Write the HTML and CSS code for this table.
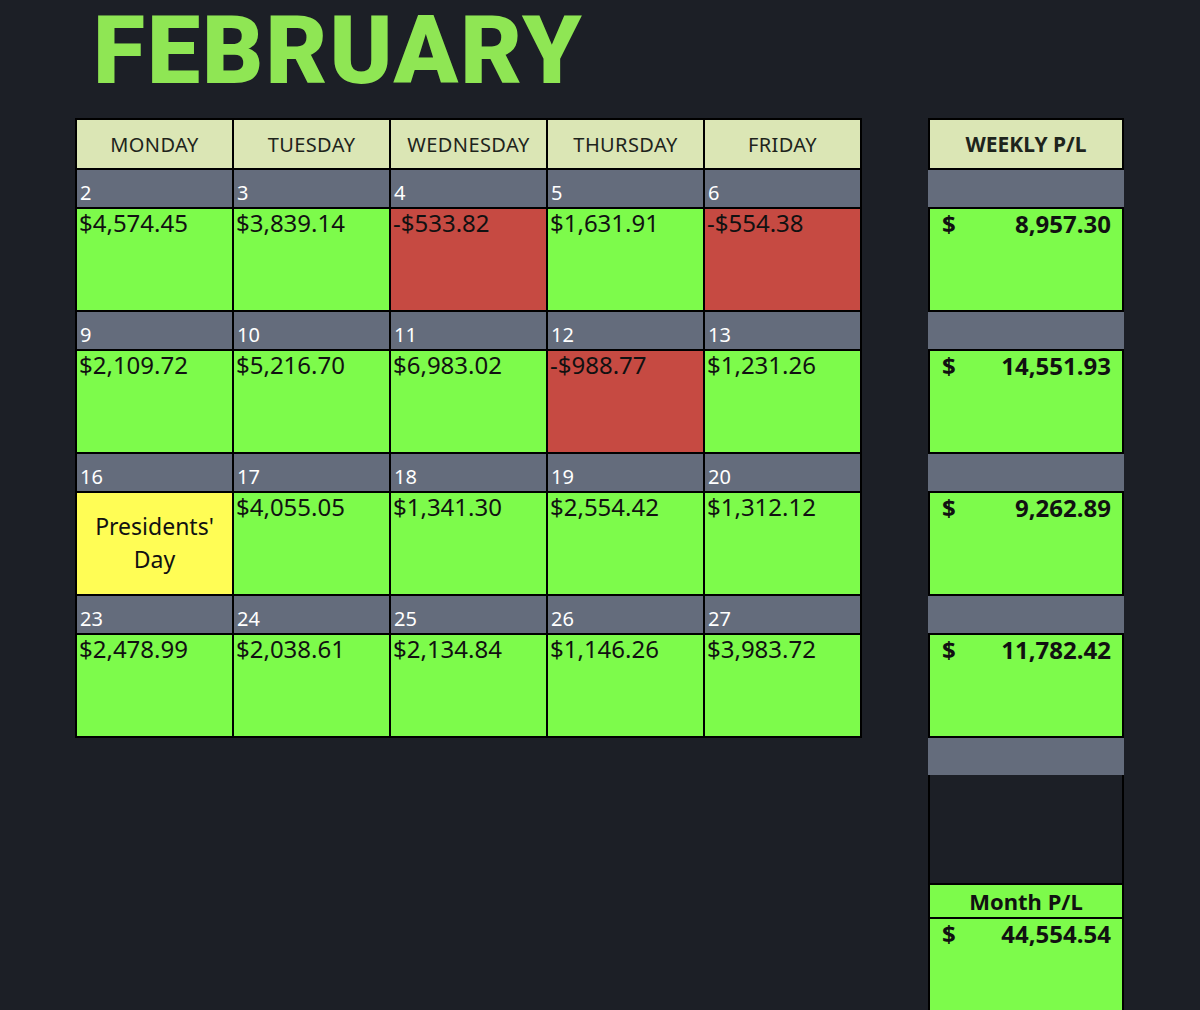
FILE: index.html
```html
<!DOCTYPE html>
<html>
<head>
<meta charset="utf-8">
<link rel="stylesheet" href="styles.css">
</head>
<body>
<div class="page">
  <h1 class="title">FEBRUARY</h1>
  <div class="board">
    <div class="calendar">
      <div class="hd">MONDAY</div>
      <div class="hd">TUESDAY</div>
      <div class="hd">WEDNESDAY</div>
      <div class="hd">THURSDAY</div>
      <div class="hd">FRIDAY</div>

      <div class="dt">2</div><div class="dt">3</div><div class="dt">4</div><div class="dt">5</div><div class="dt">6</div>
      <div class="val win">$4,574.45</div>
      <div class="val win">$3,839.14</div>
      <div class="val loss">-$533.82</div>
      <div class="val win">$1,631.91</div>
      <div class="val loss">-$554.38</div>

      <div class="dt">9</div><div class="dt">10</div><div class="dt">11</div><div class="dt">12</div><div class="dt">13</div>
      <div class="val win">$2,109.72</div>
      <div class="val win">$5,216.70</div>
      <div class="val win">$6,983.02</div>
      <div class="val loss">-$988.77</div>
      <div class="val win">$1,231.26</div>

      <div class="dt">16</div><div class="dt">17</div><div class="dt">18</div><div class="dt">19</div><div class="dt">20</div>
      <div class="val holiday">Presidents'<br>Day</div>
      <div class="val win">$4,055.05</div>
      <div class="val win">$1,341.30</div>
      <div class="val win">$2,554.42</div>
      <div class="val win">$1,312.12</div>

      <div class="dt">23</div><div class="dt">24</div><div class="dt">25</div><div class="dt">26</div><div class="dt">27</div>
      <div class="val win">$2,478.99</div>
      <div class="val win">$2,038.61</div>
      <div class="val win">$2,134.84</div>
      <div class="val win">$1,146.26</div>
      <div class="val win">$3,983.72</div>
    </div>

    <div class="weekly">
      <div class="whd">WEEKLY P/L</div>
      <div class="wdt"></div>
      <div class="wval"><span>$</span><span>8,957.30</span></div>
      <div class="wdt"></div>
      <div class="wval"><span>$</span><span>14,551.93</span></div>
      <div class="wdt"></div>
      <div class="wval"><span>$</span><span>9,262.89</span></div>
      <div class="wdt"></div>
      <div class="wval"><span>$</span><span>11,782.42</span></div>
      <div class="wdt"></div>
      <div class="wempty"></div>
      <div class="mhd">Month P/L</div>
      <div class="mval"><span>$</span><span>44,554.54</span></div>
    </div>
  </div>
</div>
</body>
</html>
```

FILE: styles.css
```css
html, body {
  margin: 0;
  padding: 0;
  background: #1c1f26;
  height: 100%;
  overflow: hidden;
}

.page {
  font-family: "Noto Sans", "DejaVu Sans", sans-serif;
  color: #111;
  padding-top: 1px;
}

.title {
  margin: -6px 0 0 0;
  padding: 0 0 0 93px;
  height: 123px;
  font-family: Roboto, "Liberation Sans", sans-serif;
  font-weight: 900;
  font-size: 95px;
  line-height: 112px;
  letter-spacing: 2px;
  color: #8fe654;
}

.board {
  display: flex;
  align-items: flex-start;
  padding-left: 75px;
  gap: 66px;
}

.calendar {
  display: grid;
  grid-template-columns: repeat(5, 155px);
  grid-template-rows: 48px repeat(4, 37px 101px);
  gap: 2px;
  padding: 2px;
  background: #000;
  width: 783px;
}

.hd {
  background: #dbe6b5;
  display: flex;
  align-items: center;
  justify-content: center;
  font-size: 20px;
  letter-spacing: 0.4px;
  color: #1e241c;
}

.dt {
  background: #646c7c;
  color: #fff;
  font-size: 20px;
  display: flex;
  align-items: flex-end;
  padding: 0 0 3px 3px;
  line-height: 22px;
}

.val {
  font-size: 24px;
  line-height: 28px;
  padding: 0 0 0 2px;
  color: #111;
}

.win { background: #7dfb4b; }
.loss { background: #c64a42; }

.holiday {
  background: #fffd55;
  display: flex;
  align-items: center;
  justify-content: center;
  text-align: center;
  font-size: 23px;
  line-height: 33px;
  padding: 0 0 2px 0;
}

.weekly {
  width: 196px;
  display: flex;
  flex-direction: column;
}

.whd {
  height: 48px;
  border: 2px solid #000;
  background: #dbe6b5;
  display: flex;
  align-items: center;
  justify-content: center;
  font-weight: 700;
  font-size: 21px;
  color: #1e241c;
}

.wdt {
  height: 37px;
  background: #646c7c;
}

.wval, .mval {
  height: 101px;
  border: 2px solid #000;
  background: #7dfb4b;
  display: flex;
  justify-content: space-between;
  padding: 0 11px 0 12px;
  font-weight: 700;
  font-size: 24px;
  line-height: 30px;
  color: #111;
}

.wempty {
  height: 108px;
  border: 2px solid #000;
  border-top: 0;
  background: #1c1f26;
}

.mhd {
  height: 32px;
  border: 2px solid #000;
  border-top: 0;
  background: #7dfb4b;
  display: flex;
  align-items: center;
  justify-content: center;
  font-weight: 700;
  font-size: 22px;
}

.mval {
  border-top: 0;
  height: 120px;
}
```
